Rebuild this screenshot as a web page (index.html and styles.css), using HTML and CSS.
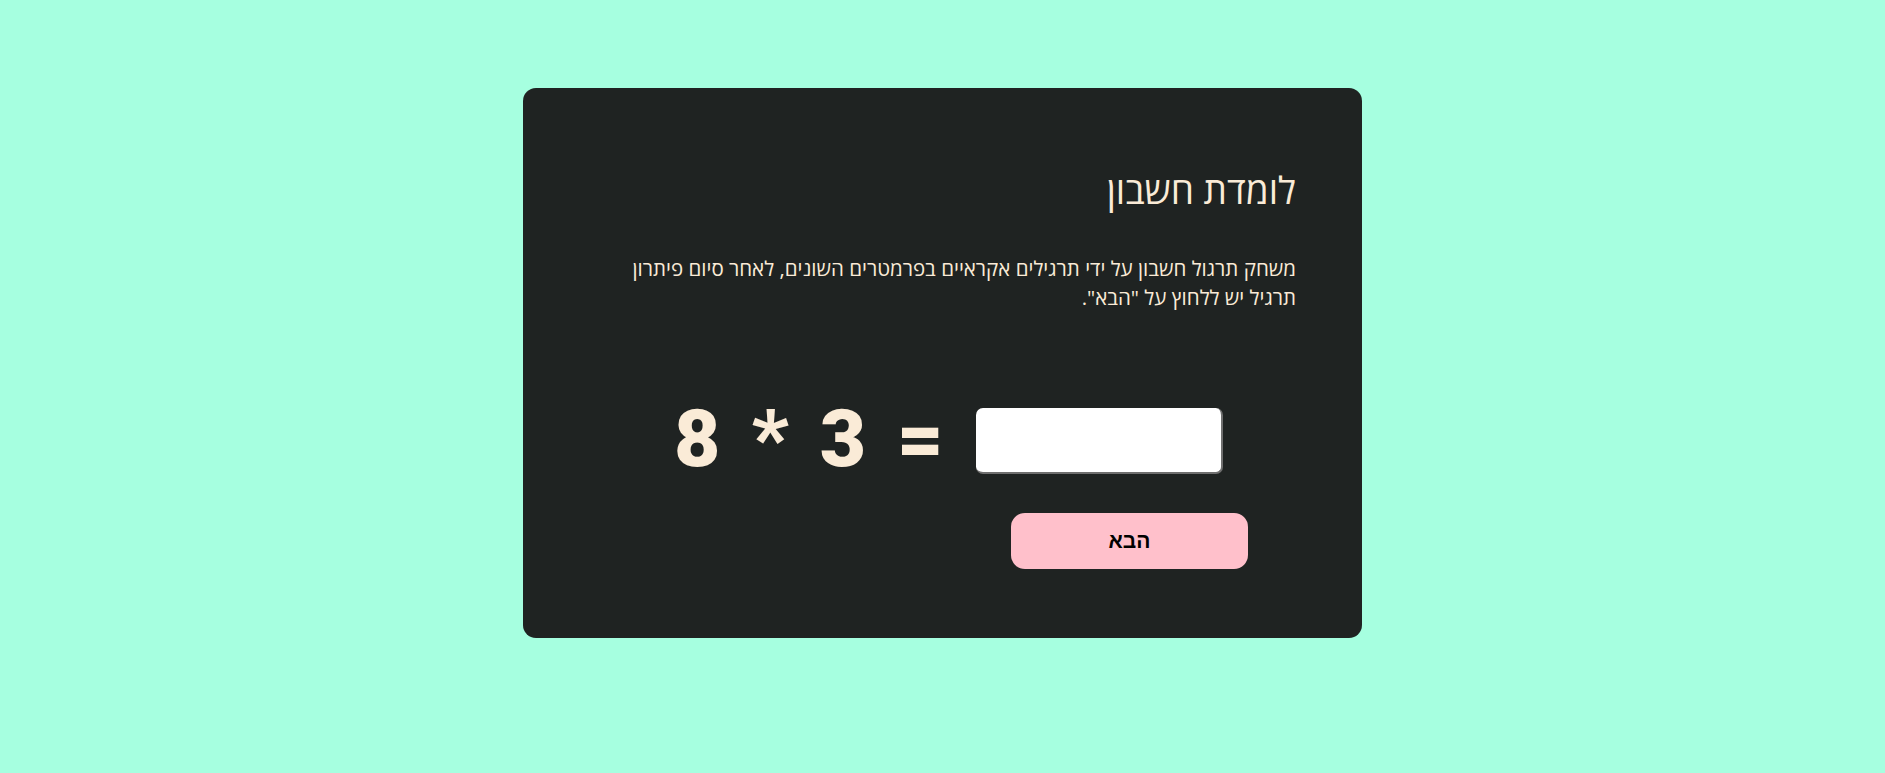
FILE: index.html
```html
<!DOCTYPE html>
<html lang="he" dir="rtl">
<head>
<meta charset="utf-8">
<title>לומדת חשבון</title>
<link rel="stylesheet" href="styles.css">
</head>
<body>
<main class="card">
  <h1 class="title">לומדת חשבון</h1>
  <p class="desc">משחק תרגול חשבון על ידי תרגילים אקראיים בפרמטרים השונים, לאחר סיום פיתרון תרגיל יש ללחוץ על "הבא".</p>
  <div class="equation">
    <span class="num">8</span>
    <span class="op">*</span>
    <span class="num">3</span>
    <span class="op">=</span>
    <input class="answer" type="text" aria-label="תשובה">
  </div>
  <div class="actions">
    <button class="next" type="button">הבא</button>
  </div>
</main>
</body>
</html>
```

FILE: styles.css
```css
html, body {
  margin: 0;
  padding: 0;
}
body {
  background: #a6ffe0;
  font-family: "Open Sans", "Liberation Sans", Arial, sans-serif;
  min-height: 773px;
  padding-top: 88px;
  box-sizing: border-box;
}
.card {
  width: 839px;
  box-sizing: border-box;
  margin: 0 auto;
  background: #1f2322;
  border-radius: 13px;
  padding: 82px 66px 69px 66px;
  color: #faebd7;
}
.title {
  margin: 0;
  font-size: 37px;
  font-weight: 400;
  line-height: 40px;
  text-align: right;
}
.desc {
  margin: 44px 0 0 0;
  font-size: 20.5px;
  line-height: 29px;
  text-align: right;
}
.equation {
  direction: ltr;
  display: flex;
  justify-content: center;
  align-items: center;
  gap: 31px;
  margin-top: 87px;
  padding-left: 12px;
}
.num, .op {
  font-family: Roboto, "Liberation Sans", sans-serif;
  font-weight: 900;
  font-size: 80px;
  line-height: 1;
  color: #faebd7;
  margin-bottom: 4px;
}
.answer {
  width: 247px;
  height: 66px;
  box-sizing: border-box;
  margin-left: 1px;
  border: none;
  border-right: 2px solid #6f6f6f;
  border-bottom: 2px solid #6f6f6f;
  border-radius: 7px;
  background: #fff;
  font-size: 28px;
  padding: 0 10px;
}
.actions {
  display: flex;
  justify-content: flex-start;
  padding-right: 48px;
  margin-top: 30px;
}
.next {
  width: 237px;
  height: 56px;
  border: none;
  border-radius: 14px;
  background: #ffc0cb;
  color: #000;
  font-family: "Liberation Sans", Arial, sans-serif;
  font-weight: 700;
  font-size: 21px;
}
```
